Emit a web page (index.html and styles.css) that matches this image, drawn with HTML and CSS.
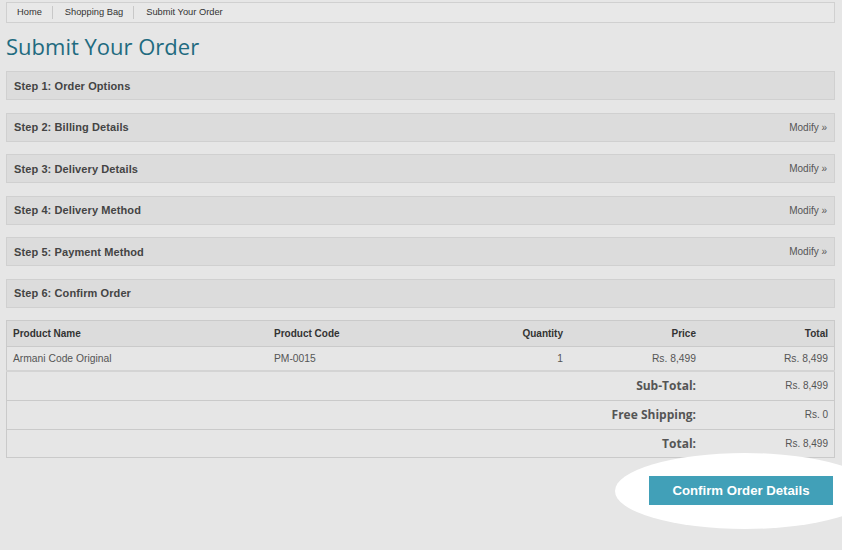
FILE: index.html
```html
<!DOCTYPE html>
<html lang="en">
<head>
    <meta charset="UTF-8">
    <meta name="viewport" content="width=device-width, initial-scale=1.0">
    <title>Submit Your Order</title>
    <link rel="stylesheet" href="styles.css">
</head>
<body>
    <div class="container">
        <div class="breadcrumb">
            <a href="#">Home</a>
            <a href="#">Shopping Bag</a>
            <a href="#">Submit Your Order</a>
        </div>

        <h1>Submit Your Order</h1>

        <div class="step"><span>Step 1: Order Options</span></div>
        <div class="step"><span>Step 2: Billing Details</span><a href="#">Modify &raquo;</a></div>
        <div class="step"><span>Step 3: Delivery Details</span><a href="#">Modify &raquo;</a></div>
        <div class="step"><span>Step 4: Delivery Method</span><a href="#">Modify &raquo;</a></div>
        <div class="step"><span>Step 5: Payment Method</span><a href="#">Modify &raquo;</a></div>
        <div class="step"><span>Step 6: Confirm Order</span></div>

        <table class="cart">
            <tr>
                <th class="name">Product Name</th>
                <th class="code">Product Code</th>
                <th class="num qty">Quantity</th>
                <th class="num price">Price</th>
                <th class="num">Total</th>
            </tr>
            <tr class="item">
                <td>Armani Code Original</td>
                <td>PM-0015</td>
                <td class="num">1</td>
                <td class="num">Rs. 8,499</td>
                <td class="num">Rs. 8,499</td>
            </tr>
            <tr class="sum">
                <td colspan="4" class="label">Sub-Total:</td>
                <td class="num">Rs. 8,499</td>
            </tr>
            <tr class="sum">
                <td colspan="4" class="label">Free Shipping:</td>
                <td class="num">Rs. 0</td>
            </tr>
            <tr class="sum">
                <td colspan="4" class="label">Total:</td>
                <td class="num">Rs. 8,499</td>
            </tr>
        </table>

        <div class="actions">
            <div class="highlight"></div>
            <button>Confirm Order Details</button>
        </div>
    </div>
</body>
</html>
```

FILE: styles.css
```css
body {
    margin: 0;
    background: #e6e6e6;
    font-family: "Liberation Sans", Arial, sans-serif;
    color: #444;
}
.container {
    padding: 2px 7px 45px 6px;
    overflow: hidden;
}
.breadcrumb {
    display: flex;
    align-items: center;
    height: 19px;
    background: #e8e8e8;
    border: 1px solid #d0d0d0;
}
.breadcrumb a {
    font-size: 9.3px;
    color: #333;
    text-decoration: none;
    padding: 0 10px 0 12px;
    border-left: 1px solid #c8c8c8;
    line-height: 13px;
}
.breadcrumb a:first-child {
    border-left: none;
    padding-left: 10px;
}
h1 {
    font-family: "Open Sans", sans-serif;
    font-weight: normal;
    font-size: 22px;
    color: #1f6b80;
    margin: 0;
    padding: 10px 0 12px;
    line-height: 26px;
}
.step {
    display: flex;
    justify-content: space-between;
    align-items: center;
    height: 27px;
    padding: 0 7px;
    background: #dcdcdc;
    border: 1px solid #d0d0d0;
    margin-bottom: 12.6px;
}
.step span {
    font-size: 11px;
    font-weight: bold;
    color: #444;
    letter-spacing: 0.1px;
}
.step a {
    font-size: 10px;
    color: #555;
    text-decoration: none;
}
.cart {
    width: 100%;
    border-collapse: collapse;
    border: 1px solid #cacaca;
    font-size: 10px;
    margin-top: -1px;
}
.cart th, .cart td {
    padding: 0 6px;
    text-align: left;
}
.cart th {
    height: 25px;
    background: #dcdcdc;
    color: #333;
    font-weight: bold;
    border-bottom: 1px solid #cacaca;
}
.cart th.name {
    width: 249px;
}
.cart th.code {
    width: 156px;
}
.cart th.price, .cart th.qty {
    width: 121px;
}
.cart .num {
    text-align: right;
}
.cart .item td {
    height: 23px;
    color: #555;
    font-size: 10.3px;
    border-bottom: 2px solid #d4d4d4;
    background: #e6e6e6;
}
.cart .sum td {
    height: 28px;
    color: #555;
    border-top: 1px solid #cacaca;
}
.cart .sum:last-child td {
    height: 27px;
}
.cart .sum .label {
    text-align: right;
    font-family: "Open Sans", sans-serif;
    font-weight: bold;
    font-size: 12px;
}
.actions {
    position: relative;
    display: flex;
    justify-content: flex-end;
    padding: 18px 2px 0 0;
}
.highlight {
    position: absolute;
    left: 609px;
    top: -5px;
    width: 260px;
    height: 76px;
    border-radius: 50%;
    background: #fff;
}
.actions button {
    position: relative;
    width: 184px;
    height: 29px;
    border: none;
    background: #41a0b8;
    color: #fff;
    font-family: "Liberation Sans", Arial, sans-serif;
    font-weight: bold;
    font-size: 13.2px;
}
```
